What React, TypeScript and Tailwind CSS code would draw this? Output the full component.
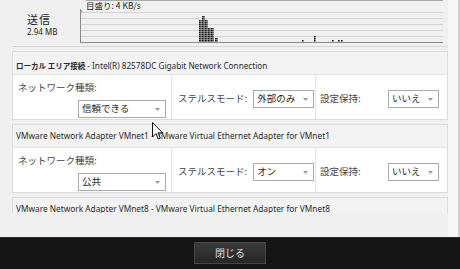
const jp = "font-['Noto_Sans_CJK_JP','Noto_Sans',sans-serif]";
const lat = "font-['Noto_Sans','Noto_Sans_CJK_JP',sans-serif]";

type Bar = { x: number; top: number };

const bars: Bar[] = [
  { x: 119, top: 19 },
  { x: 122, top: 15 },
  { x: 125, top: 19 },
  { x: 128, top: 27 },
  { x: 131, top: 27 },
  { x: 135, top: 37 },
  { x: 222, top: 39 },
  { x: 234, top: 36 },
  { x: 252, top: 39 },
  { x: 258, top: 39 },
  { x: 261, top: 39 },
];

function Chart() {
  const grid = [12, 18, 24, 30, 36];
  return (
    <div className="relative flex-1 h-[43px] mr-[3px]">
      <svg className="absolute inset-0" width="363" height="43" viewBox="0 0 363 43">
        <line x1="6" y1="0.5" x2="363" y2="0.5" stroke="#a9a9a9" />
        {grid.map((y) => (
          <line key={y} x1="1" y1={y + 0.5} x2="363" y2={y + 0.5} stroke="#d4d4d4" />
        ))}
        <line x1="0.5" y1="10" x2="0.5" y2="43" stroke="#8a8a8a" />
        <line x1="0" y1="42.5" x2="363" y2="42.5" stroke="#8c8c8c" />
        <path d="M-1 12 L0.5 9.5 L2 12" fill="none" stroke="#8a8a8a" />
        {bars.map((b) =>
          Array.from({ length: Math.floor((42 - b.top) / 2) }).map((_, i) => (
            <rect key={b.x + "-" + i} x={b.x} y={40 - i * 2} width="1.6" height="1.6" fill="#1c1c1c" />
          ))
        )}
        {bars.map((b) =>
          Array.from({ length: Math.floor((42 - b.top) / 2) }).map((_, i) =>
            b.x < 140 ? (
              <rect key={"b" + b.x + "-" + i} x={b.x + 1.6} y={40 - i * 2} width="1" height="1.6" fill="#1c1c1c" />
            ) : null
          )
        )}
      </svg>
      <div className={`${jp} absolute left-[6px] top-[0px] text-[8.5px] leading-[11px] text-[#222]`}>目盛り: 4 KB/s</div>
    </div>
  );
}

function Select({ value, w }: { value: string; w: string }) {
  return (
    <div className={`${w} h-[18px] bg-white border border-[#ababab] flex items-center pl-[3px] pr-[5px]`}>
      <span className={`${jp} flex-1 text-[9.5px] text-[#1e1e1e] leading-none`}>{value}</span>
      <svg width="5" height="3" viewBox="0 0 5 3">
        <path d="M0 0 L5 0 L2.5 3 Z" fill="#9a9a9a" />
      </svg>
    </div>
  );
}

function Card({
  title,
  sub,
  network,
  stealth,
}: {
  title: React.ReactNode;
  sub?: boolean;
  network?: string;
  stealth?: string;
}) {
  return (
    <div className="shrink-0 h-[69px] border border-[#dcdcdc] bg-[#f3f3f3] flex flex-col">
      <div className="h-[23px] shrink-0 flex items-center pl-[3px] border-b border-[#e2e2e2] whitespace-nowrap overflow-hidden">
        {title}
      </div>
      {sub ? (
        <div className="flex-1 bg-white" />
      ) : (
        <div className="flex-1 flex bg-white">
          <div className="w-[159px] flex flex-col border-r border-[#e4e4e4]">
            <div className={`${jp} pl-[5px] pt-[6px] text-[9.5px] leading-[12px] text-[#444]`}>ネットワーク種類:</div>
            <div className="mt-auto mb-[1px] self-end mr-[5px]">
              <Select value={network ?? ""} w="w-[88px]" />
            </div>
          </div>
          <div className="w-[144px] flex items-center pt-[4px] pl-[6px] gap-[6px] border-r border-[#e4e4e4]">
            <span className={`${jp} text-[9.5px] text-[#444] leading-none`}>ステルスモード:</span>
            <Select value={stealth ?? ""} w="w-[61px]" />
          </div>
          <div className="flex-1 flex items-center pt-[4px] pl-[4px] pr-[8px] justify-between">
            <span className={`${jp} text-[9.5px] text-[#444] leading-none`}>設定保持:</span>
            <Select value="いいえ" w="w-[51px]" />
          </div>
        </div>
      )}
    </div>
  );
}

function Cursor() {
  return (
    <svg className="absolute left-[152px] top-[122px]" width="11" height="18" viewBox="0 0 11 18">
      <path d="M0.5 0.5 L0.5 15 L4 11.5 L6.3 17 L8.3 16.2 L6 10.8 L10.5 10.8 Z" fill="#fff" stroke="#111" strokeWidth="1" strokeLinejoin="round" />
    </svg>
  );
}

export default function App() {
  return (
    <div className="relative w-[460px] h-[269px] flex flex-col bg-[#f0f0f0] overflow-hidden">
      <div className="h-[237px] flex">
        <div className="w-[448px] flex flex-col">
          <div className="h-[46px] flex">
            <div className="w-[80px] pl-[27px] pt-[13px]">
              <div className={`${jp} text-[11px] leading-[12px] tracking-[1px] text-[#222]`}>送信</div>
              <div className={`${lat} text-[8px] leading-[10px] mt-[2px] text-[#222]`}>2.94 MB</div>
            </div>
            <Chart />
          </div>
          <div className="ml-[13px] border-t border-[#d6d6d6]" />
          <div className="h-[162px] mt-[4px] ml-[12px] flex flex-col gap-[4px] overflow-hidden">
            <Card
              title={
                <span className="text-[#2a2a2a]">
                  <span className={`${jp} text-[7.5px] font-bold`}>ローカル エリア接続</span>
                  <span className={`${lat} text-[8.2px]`}> - Intel(R) 82578DC Gigabit Network Connection</span>
                </span>
              }
              network="信頼できる"
              stealth="外部のみ"
            />
            <Card
              title={
                <span className={`${lat} text-[8.3px] text-[#2a2a2a]`}>
                  VMware Network Adapter VMnet1 - VMware Virtual Ethernet Adapter for VMnet1
                </span>
              }
              network="公共"
              stealth="オン"
            />
            <Card
              sub
              title={
                <span className={`${lat} text-[8.3px] text-[#2a2a2a]`}>
                  VMware Network Adapter VMnet8 - VMware Virtual Ethernet Adapter for VMnet8
                </span>
              }
            />
          </div>
        </div>
        <div className="flex-1 bg-[#f6f6f6]" />
        <div className="w-[2px] bg-[#cfcfcf]" />
      </div>
      <div className="flex-1 bg-[#141414] border-t border-[#2c2c2c] flex justify-center pt-[4px]">
        <button className={`${jp} w-[72px] h-[22px] bg-gradient-to-b from-[#3a3a3a] to-[#262626] border border-[#474747] text-[10px] leading-none text-[#dedede]`}>
          閉じる
        </button>
      </div>
      <Cursor />
    </div>
  );
}
